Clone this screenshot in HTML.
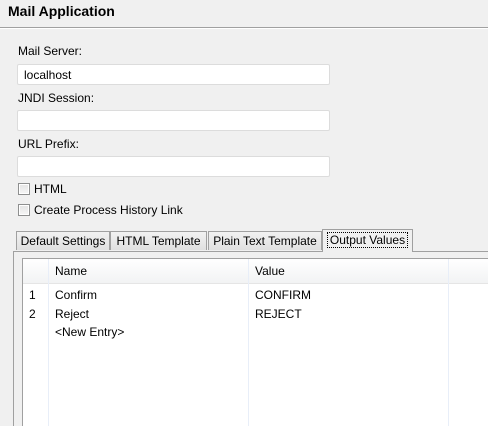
<!DOCTYPE html><html><head><style>
html,body{margin:0;width:488px;height:426px;overflow:hidden}
body{background:#f0f0f0;font-family:"Liberation Sans",sans-serif;font-size:12px;color:#000;position:relative}
.a{position:absolute;white-space:nowrap}
.in{position:absolute;left:17px;width:311px;height:19px;background:#fff;border:1px solid #dcdcdc;border-radius:2px}
.cb{position:absolute;left:18px;width:10px;height:10px;border:1px solid #8e8f8f;background:linear-gradient(#e4e4e4,#f6f6f6);box-shadow:inset 0 0 0 1px #fff}
.tab{position:absolute;top:231px;height:19px;border:1px solid #a0a0a0;border-bottom:none;background:linear-gradient(#f2f2f2,#e0e0e0);line-height:19px;font-size:12px;white-space:nowrap;box-sizing:border-box;text-align:center}
</style></head><body>
<div class="a" style="left:8px;top:3px;font-size:14px;font-weight:bold">Mail Application</div>
<div class="a" style="left:0;top:27px;width:488px;height:1px;background:#a0a0a0"></div>
<div class="a" style="left:0;top:28px;width:488px;height:1px;background:#fff"></div>
<div class="a" style="left:18px;top:44px">Mail Server:</div>
<div class="in" style="top:64px"><span style="position:absolute;left:6px;top:3px">localhost</span></div>
<div class="a" style="left:18px;top:91px">JNDI Session:</div>
<div class="in" style="top:110px"></div>
<div class="a" style="left:18px;top:137px">URL Prefix:</div>
<div class="in" style="top:156px"></div>
<div class="cb" style="top:183px"></div><div class="a" style="left:34px;top:182px">HTML</div>
<div class="cb" style="top:204px"></div><div class="a" style="left:34px;top:203px">Create Process History Link</div>
<div class="a" style="left:13px;top:251px;width:480px;height:180px;border:1px solid #a0a0a0;background:#f0f0f0"></div>
<div class="tab" style="left:16px;width:94px">Default Settings</div>
<div class="tab" style="left:110px;width:97px">HTML Template</div>
<div class="tab" style="left:208px;width:114px">Plain Text Template</div>
<div class="tab" style="left:322px;top:229px;height:23px;width:91px;background:#f0f0f0;line-height:20px"><span style="border:1px dotted #000;padding:0 2px">Output Values</span></div>
<div class="a" style="left:22px;top:258px;width:470px;height:180px;border:1px solid #a0a0a0;background:#fff"></div>
<div class="a" style="left:23px;top:259px;width:466px;height:24px;background:linear-gradient(#fff,#f2f3f4);border-bottom:1px solid #e5e5e5"></div>
<div class="a" style="left:48px;top:259px;width:1px;height:167px;background:#e8eef8"></div>
<div class="a" style="left:248px;top:259px;width:1px;height:167px;background:#e8eef8"></div>
<div class="a" style="left:448px;top:259px;width:1px;height:167px;background:#e8eef8"></div>
<div class="a" style="left:55px;top:264px">Name</div>
<div class="a" style="left:255px;top:264px">Value</div>
<div class="a" style="left:29px;top:288px">1</div><div class="a" style="left:55px;top:288px">Confirm</div><div class="a" style="left:255px;top:288px">CONFIRM</div>
<div class="a" style="left:29px;top:307px">2</div><div class="a" style="left:55px;top:307px">Reject</div><div class="a" style="left:255px;top:307px">REJECT</div>
<div class="a" style="left:55px;top:325px">&lt;New Entry&gt;</div>
</body></html>
